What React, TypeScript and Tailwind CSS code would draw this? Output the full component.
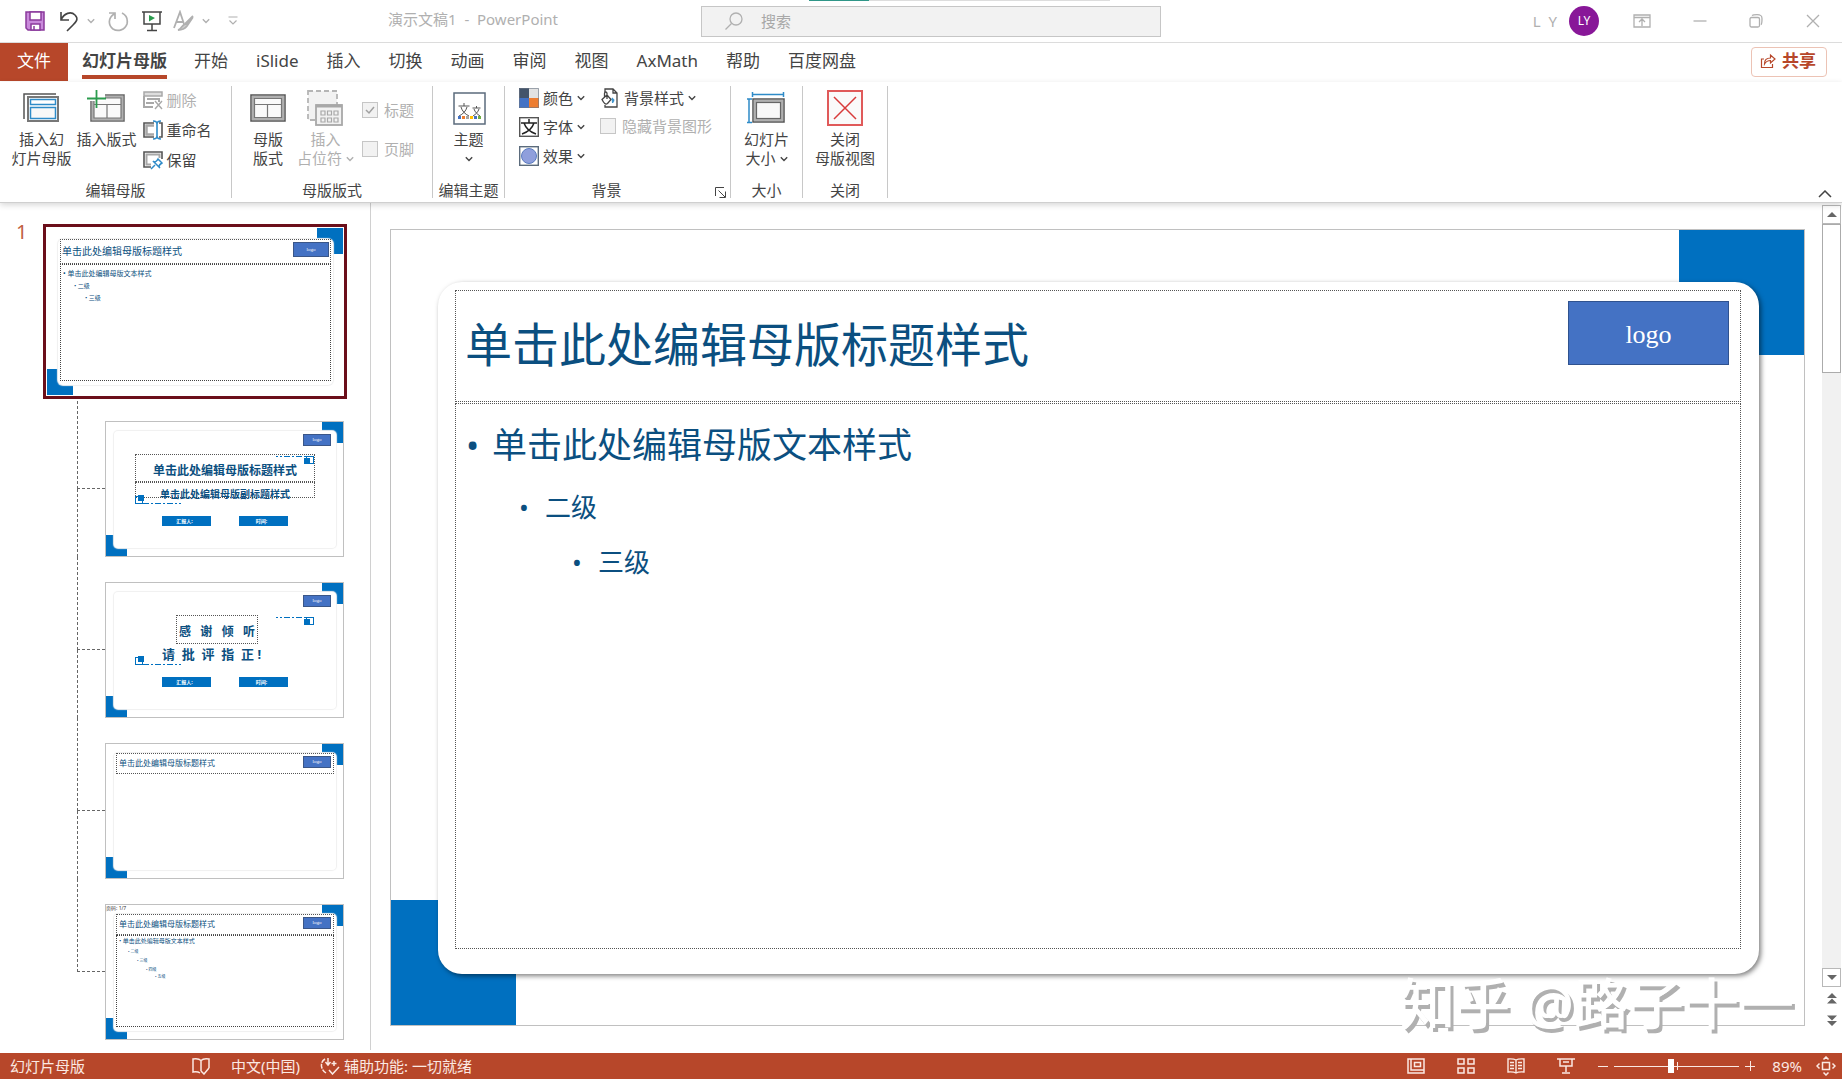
import React, { useState } from 'react';
import clsx from 'clsx';

const TABS = ['开始', 'iSlide', '插入', '切换', '动画', '审阅', '视图', 'AxMath', '帮助', '百度网盘'];

const Chevron: React.FC<{ className?: string }> = ({ className = 'w-2' }) => (
    <svg viewBox="0 0 8 8" className={clsx('shrink-0', className)} fill="none" stroke="currentColor" strokeWidth="1.4">
        <path d="M0.8 2.3 4 5.5 7.2 2.3" />
    </svg>
);

/* ---------- Ribbon icons ---------- */

const InsertMasterIcon = () => (
    <svg viewBox="0 0 36 36" className="h-9 w-9" fill="none">
        <path d="M1 29V4h32" stroke="#555" strokeWidth="1.500" />
        <rect x="5" y="7" width="30" height="24" fill="#fff" stroke="#777" strokeWidth="2" />
        <rect x="7.500" y="9.500" width="25" height="5" stroke="#2e8bc8" strokeWidth="1.500" />
        <rect x="7.500" y="17.500" width="25" height="11" fill="#f8f8f8" stroke="#2e8bc8" strokeWidth="1.500" />
    </svg>
);

const InsertLayoutIcon = () => (
    <svg viewBox="0 0 38 36" className="h-9 w-[38px]" fill="none">
        <rect x="4" y="5" width="33" height="26" fill="#fafafa" stroke="#666" strokeWidth="1.500" />
        <rect x="6" y="7" width="29" height="22" stroke="#b0b0b0" strokeWidth="2" />
        <path d="M7 14.500h27M20 14.500V28M7 8h27v20H7z" stroke="#777" strokeWidth="1.200" />
        <path d="M0 0h18v11H0z" fill="#fff" />
        <path d="M9.500 0v18M0 8.500h19" stroke="#2b9c4e" strokeWidth="1.800" />
    </svg>
);

const LayoutIcon = () => (
    <svg viewBox="0 0 36 36" className="h-9 w-9" fill="none">
        <rect x="1" y="5" width="34" height="26" fill="#fafafa" stroke="#555" strokeWidth="1.500" />
        <rect x="3" y="7" width="30" height="22" stroke="#b0b0b0" strokeWidth="2" />
        <path d="M4.500 14.500h27M17.500 14.500V27.500M4.500 8.500h27v19h-27z" stroke="#777" strokeWidth="1.200" />
    </svg>
);

const PlaceholderIcon = () => (
    <svg viewBox="0 0 36 36" className="h-9 w-9" fill="none">
        <path d="M1 1h29v29H1z" fill="#f2f2f2" stroke="#b5b5b5" strokeWidth="1.800" strokeDasharray="5 3" />
        <rect x="9" y="15" width="26" height="20" fill="#f2f2f2" stroke="#a8a8a8" strokeWidth="1.800" />
        <path d="M9 16h26" stroke="#a8a8a8" strokeWidth="3" />
        <path d="M14 21h4v4h-4zM20.500 21h4v4h-4zM27 21h4v4h-4zM14 28h4v4h-4zM20.500 28h4v4h-4zM27 28h4v4h-4z" stroke="#a8a8a8" strokeWidth="1.200" />
    </svg>
);

const ThemeIcon = () => (
    <svg viewBox="0 0 36 36" className="h-9 w-9" fill="none" stroke="#555">
        <rect x="3" y="3" width="31" height="31" fill="#fff" stroke="#5b6b7c" strokeWidth="1.500" />
        <path d="M7.500 16h11M13 13v3M10 17c1 4 4 7 8 9M16 17c-1 4-4 7-8 9" strokeWidth="1" />
        <path d="M21.500 18h8M25.500 16v2M23 19c1 3 3 5 6 7M28 19c-1 3-3 5-6 7" strokeWidth="1" />
        <path d="M7 27.500h3" stroke="#4472c4" strokeWidth="3" />
        <path d="M11 27.500h3" stroke="#ed7d31" strokeWidth="3" />
        <path d="M15 27.500h3" stroke="#a5a5a5" strokeWidth="3" />
        <path d="M19 27.500h3" stroke="#ffc000" strokeWidth="3" />
        <path d="M23 27.500h3" stroke="#4472c4" strokeWidth="3" />
        <path d="M27 27.500h3" stroke="#70ad47" strokeWidth="3" />
    </svg>
);

const SlideSizeIcon = () => (
    <svg viewBox="0 0 40 36" className="h-9 w-10" fill="none">
        <path d="M6 4.500h32M6.500 2v5M37.500 2v5M3 9v24M1 9h5M1 32.500h5" stroke="#2e8bc8" strokeWidth="1.500" />
        <rect x="7" y="9" width="31" height="23" fill="#f8f8f8" stroke="#555" strokeWidth="1.500" />
        <rect x="9" y="11" width="27" height="19" stroke="#b0b0b0" strokeWidth="2" />
        <rect x="10.500" y="12.500" width="24" height="16" stroke="#666" strokeWidth="1.200" />
    </svg>
);

const CloseMasterIcon = () => (
    <svg viewBox="0 0 36 36" className="h-9 w-9" fill="none" stroke="#e05a5a">
        <rect x="1" y="1" width="34" height="34" fill="#fafafa" strokeWidth="2" />
        <path d="M7 7l22 22M29 7 7 29" stroke="#d83b3b" strokeWidth="1.500" />
    </svg>
);

const DeleteIcon = () => (
    <svg viewBox="0 0 20 20" className="h-5 w-5" fill="none" stroke="#a8a8a8">
        <rect x="1" y="2" width="18" height="4" fill="#ddd" strokeWidth="1.500" />
        <path d="M1 6v11h9M3 13h8M4 9h12v3" strokeWidth="2" />
        <path d="M12 11l7 8M19 11l-7 8" strokeWidth="1.400" />
    </svg>
);

const RenameIcon = () => (
    <svg viewBox="0 0 20 20" className="h-5 w-5" fill="none">
        <path d="M11 3H1v14h10M16 3h3v14h-3" stroke="#555" strokeWidth="1.600" />
        <path d="M11 5.500H3.500v9H11" stroke="#a8a8a8" strokeWidth="2.500" />
        <path d="M10 1c3 0 4 1 4 3v12c0 2-1 3-4 3M18 1c-3 0-4 1-4 3v12c0 2 1 3 4 3" stroke="#2e8bc8" strokeWidth="1.600" />
    </svg>
);

const PreserveIcon = () => (
    <svg viewBox="0 0 20 20" className="h-5 w-5" fill="none">
        <path d="M8 17H1V2h18v7" stroke="#555" strokeWidth="1.600" />
        <path d="M8 14.500H3.500v-10h13V8" stroke="#a8a8a8" strokeWidth="2" />
        <path d="M8 19l4-4M10 11l7 7M11 12c2 0 3-1 4-3l4 4c-2 1-3 2-3 4z" stroke="#2e8bc8" strokeWidth="1.500" fill="#fff" />
    </svg>
);

const ColorsIcon = () => (
    <svg viewBox="0 0 20 20" className="h-5 w-5">
        <path d="M0 0h10v10H0z" fill="#44546a" />
        <path d="M10 0h10v10H10z" fill="#e2e2e2" />
        <path d="M0 10h10v10H0z" fill="#4472c4" />
        <path d="M10 10h10v10H10z" fill="#ed7d31" />
        <path d="M0.500 0.500h19v19H0.500z" fill="none" stroke="#6b7786" strokeOpacity="0.600" />
    </svg>
);

const FontsIcon = () => (
    <svg viewBox="0 0 20 20" className="h-5 w-5" fill="none" stroke="#222">
        <rect x="0.700" y="0.700" width="18.600" height="18.600" fill="#fff" stroke="#555" strokeWidth="1.400" />
        <path d="M2 6h16M10 2v4M5 6c2 6 6 9 12 11M15 6c-2 6-6 9-12 11" strokeWidth="1.500" />
    </svg>
);

const EffectsIcon = () => (
    <svg viewBox="0 0 20 20" className="h-5 w-5">
        <rect x="0.700" y="0.700" width="18.600" height="18.600" fill="#fff" stroke="#5b6b7c" strokeWidth="1.400" />
        <circle cx="10" cy="10" r="7.500" fill="#8f9fdc" stroke="#5a7cc0" />
    </svg>
);

const BackgroundIcon = () => (
    <svg viewBox="0 0 20 20" className="h-5 w-5" fill="none" stroke="#444" strokeWidth="1.300">
        <path d="M5 4V1h8l4 4v14H5v-2M13 1v4h4" />
        <path d="M2 11.500l5-4.500 4 4.500-3.500 4c-2 1.500-3.500 0-5.500-4zM7 11V5.500c0-2-2.500-2-2.500 0V9" fill="#fff" />
        <path d="M12 10c2.500 1 2.500 3 .5 5z" fill="#2e8bc8" stroke="#2e8bc8" strokeWidth="0.800" />
    </svg>
);

/* ---------- Ribbon parts ---------- */

type GroupProps = {
    label: string;
    className: string;
    launcher?: boolean;
    children: React.ReactNode;
};

const Group: React.FC<GroupProps> = ({ label, className, launcher, children }) => (
    <section aria-label={label} className={clsx('relative my-1 flex shrink-0 flex-col border-r border-[#c8c8c8] pt-1', className)}>
        <div className="flex flex-1 justify-center">{children}</div>
        <div className={clsx('text-center leading-[16px]', launcher && 'pr-[22px]')}>{label}</div>
        {launcher && (
            <button aria-label="设置背景格式" className="absolute right-1 bottom-0">
                <svg viewBox="0 0 11 11" className="w-[11px]" fill="none" stroke="#444">
                    <path d="M0.500 9V0.500H9M3.500 3.500 10 10M10.500 4.500v6h-6" />
                </svg>
            </button>
        )}
    </section>
);

type BigButtonProps = {
    icon: React.ReactNode;
    lines: string[];
    menu?: boolean;
    disabled?: boolean;
};

const BigButton: React.FC<BigButtonProps> = ({ icon, lines, menu, disabled }) => (
    <button disabled={disabled} className="flex flex-col items-center self-start leading-[19px] whitespace-nowrap disabled:text-[#b0b0b0]">
        <span className="mb-1 flex h-9">{icon}</span>
        {lines.map((line, i) => (
            <span key={i} className="flex min-h-[19px] items-center gap-1">
                {line}
                {menu && i === lines.length - 1 && <Chevron />}
            </span>
        ))}
    </button>
);

type SmallButtonProps = {
    icon: React.ReactNode;
    label: string;
    menu?: boolean;
    disabled?: boolean;
};

const SmallButton: React.FC<SmallButtonProps> = ({ icon, label, menu, disabled }) => (
    <button disabled={disabled} className="flex items-center gap-1 leading-5 whitespace-nowrap disabled:text-[#b0b0b0]">
        {icon}
        {label}
        {menu && <Chevron />}
    </button>
);

const Check: React.FC<{ label: string; checked?: boolean }> = ({ label, checked = false }) => (
    <label className="flex items-center gap-[6px] leading-5 whitespace-nowrap text-[#b0b0b0]">
        <span className="grid h-4 w-4 place-items-center">
            <input
                type="checkbox"
                checked={checked}
                disabled
                readOnly
                className="col-start-1 row-start-1 h-4 w-4 appearance-none border border-[#c6c6c6] bg-[#f2f2f2]"
            />
            {checked && (
                <svg viewBox="0 0 10 10" className="col-start-1 row-start-1 w-[10px]" fill="none" stroke="#a0a0a0" strokeWidth="1.500">
                    <path d="M1 5l3 3 5-6" />
                </svg>
            )}
        </span>
        {label}
    </label>
);

/* ---------- Title bar ---------- */

const TitleBar = () => (
    <header className="grid h-[43px] grid-cols-[701fr_460fr_681fr] border-b border-[#dcdcdc] text-[#b0b0b0]">
        <div className="flex items-center pl-6 text-[15px]">
            <button aria-label="保存">
                <svg viewBox="0 0 22 22" className="w-[22px]" fill="#c98adb" stroke="#8a3a9c" strokeWidth="1.500">
                    <path d="M2 2h18v18H4l-2-2z" />
                    <path d="M6 2h11v8H6zM7 14h9v6H7z" fill="#fff" />
                    <path d="M10 16v4" />
                </svg>
            </button>
            <button aria-label="撤消" className="ml-3 text-[#444]">
                <svg viewBox="0 0 22 22" className="w-[22px]" fill="none" stroke="currentColor" strokeWidth="1.600">
                    <path d="M3 2v8h8M3 10c3-7 10-9 14-5s1 7-2 10l-6 6" />
                </svg>
            </button>
            <Chevron className="ml-[7px] w-2" />
            <button aria-label="重复" className="ml-3">
                <svg viewBox="0 0 22 22" className="w-[22px]" fill="none" stroke="currentColor" strokeWidth="1.700">
                    <path d="M2 3h6v6M7 4c-6 4-6 11-1 15 5 3 12 1 14-5 1-5-1-9-5-11" />
                </svg>
            </button>
            <button aria-label="从头开始" className="ml-3 text-[#444]">
                <svg viewBox="0 0 22 22" className="w-[22px]" fill="none" stroke="currentColor" strokeWidth="1.500">
                    <path d="M1 2h20M3 2v12h16V2M11 14v6M6 20.500h10" />
                    <path d="M8 5l6 3-6 3.500z" fill="#2b9c4e" stroke="none" />
                </svg>
            </button>
            <button aria-label="墨迹" className="ml-[10px]">
                <svg viewBox="0 0 22 22" className="w-[22px]" fill="none" stroke="currentColor" strokeWidth="1.800">
                    <path d="M1 18 7 2l4 12M3 12h7" />
                    <path d="M20 6l-8 8M20 7l-6 9c-3 4-6 4-9 4 4-1 4-6 8-6z" fill="currentColor" fillOpacity="0.600" />
                </svg>
            </button>
            <Chevron className="ml-[7px] w-2" />
            <button aria-label="自定义快速访问工具栏" className="ml-[18px]">
                <svg viewBox="0 0 10 10" className="w-[10px]" fill="none" stroke="currentColor" strokeWidth="1.200">
                    <path d="M0.500 1h9M1.500 4.500 5 8l3.500-3.500" />
                </svg>
            </button>
            <h1 className="mb-1 ml-[150px] whitespace-pre">演示文稿1  -  PowerPoint</h1>
        </div>
        <div className="relative flex items-center">
            <div className="absolute top-0 left-[108px] flex h-px w-[301px] bg-[#ddd]">
                <span className="w-[60px] bg-[#2f9688]" />
            </div>
            <label className="flex h-[31px] w-full items-center border border-[#c6c6c6] bg-[#f2f2f2] pl-[23px]">
                <svg viewBox="0 0 18 18" className="w-[18px]" fill="none" stroke="currentColor" strokeWidth="1.300">
                    <circle cx="11" cy="7" r="6" />
                    <path d="M6.500 11.500 0.500 17.500" />
                </svg>
                <input
                    type="search"
                    aria-label="搜索"
                    placeholder="搜索"
                    className="ml-[18px] flex-1 bg-transparent text-[15px] outline-none placeholder:text-[#a8a8a8]"
                />
            </label>
        </div>
        <div className="flex items-center justify-end pr-[22px] text-[15px]">
            <span className="whitespace-pre">L  Y</span>
            <button className="ml-3 h-[30px] w-[30px] rounded-full bg-[#881798] text-xs text-white">LY</button>
            <button aria-label="功能区显示选项" className="ml-[34px]">
                <svg viewBox="0 0 18 14" className="w-[18px]" fill="none" stroke="currentColor" strokeWidth="1.300">
                    <path d="M1 1h16v12H1zM1 3.500h16M9 12V5.500M6 8l3-3 3 3" />
                </svg>
            </button>
            <button aria-label="最小化" className="ml-[42px]">
                <svg viewBox="0 0 14 14" className="w-[14px]" stroke="currentColor" strokeWidth="1.300">
                    <path d="M0.500 7h13" />
                </svg>
            </button>
            <button aria-label="还原" className="ml-[42px]">
                <svg viewBox="0 0 14 14" className="w-[14px]" fill="none" stroke="currentColor" strokeWidth="1.300">
                    <rect x="1" y="3.500" width="9.500" height="9.500" rx="1.500" />
                    <path d="M3 1.500c1-.8 2-.8 5-.8 4 0 5 1 5 4 0 3 0 5-1 6" />
                </svg>
            </button>
            <button aria-label="关闭" className="ml-[43px]">
                <svg viewBox="0 0 14 14" className="w-[14px]" stroke="currentColor" strokeWidth="1.300">
                    <path d="M1 1l12 12M13 1 1 13" />
                </svg>
            </button>
        </div>
    </header>
);

const TabBar = () => (
    <nav className="flex h-[39px] items-center text-[17px] leading-6 text-[#444]">
        <button className="h-[38px] w-[68px] self-start bg-[#b7472a] pb-[2px] text-white">文件</button>
        <button className="relative ml-[14px] h-full pb-1 font-bold">
            幻灯片母版
            <span className="absolute inset-x-0 bottom-[3px] h-1 bg-[#b7472a]" />
        </button>
        <div className="ml-[27px] flex gap-7 pb-1">
            {TABS.map((tab) => (
                <button key={tab}>{tab}</button>
            ))}
        </div>
        <button className="mr-[15px] mb-[2px] ml-auto flex h-[30px] items-center gap-[6px] rounded border border-[#ecc3b5] pr-[10px] pb-[2px] pl-2 font-bold text-[#b7472a]">
            <svg viewBox="0 0 16 16" className="w-4" fill="none" stroke="currentColor" strokeWidth="1.200">
                <path d="M4 6H1.500v8.500h11V11M4.500 11c0-4 2-6 6-6V2l4.500 4-4.500 4V7.500c-3 0-4.500 1-6 3.500z" />
            </svg>
            共享
        </button>
    </nav>
);

const Ribbon = () => (
    <div className="relative z-20 flex h-[121px] border-b border-[#cfcfcf] bg-white text-[15px] text-[#444] shadow-[0_2px_6px_rgba(0,0,0,0.16)]">
        <Group label="编辑母版" className="w-[232px]">
            <div className="flex gap-[5px]">
                <BigButton icon={<InsertMasterIcon />} lines={['插入幻', '灯片母版']} />
                <BigButton icon={<InsertLayoutIcon />} lines={['插入版式']} />
            </div>
            <div className="mr-2 ml-[6px] flex flex-col gap-[10px]">
                <SmallButton icon={<DeleteIcon />} label="删除" disabled />
                <SmallButton icon={<RenameIcon />} label="重命名" />
                <SmallButton icon={<PreserveIcon />} label="保留" />
            </div>
        </Group>
        <Group label="母版版式" className="w-[201px]">
            <BigButton icon={<LayoutIcon />} lines={['母版', '版式']} />
            <div className="ml-[11px]">
                <BigButton icon={<PlaceholderIcon />} lines={['插入', '占位符']} menu disabled />
            </div>
            <div className="mt-[10px] ml-2 flex flex-col gap-[19px]">
                <Check label="标题" checked />
                <Check label="页脚" />
            </div>
        </Group>
        <Group label="编辑主题" className="w-[72px]">
            <BigButton icon={<ThemeIcon />} lines={['主题', '']} menu />
        </Group>
        <Group label="背景" launcher className="w-[226px]">
            <div className="-mt-[2px] flex flex-col gap-[9px]">
                <SmallButton icon={<ColorsIcon />} label="颜色" menu />
                <SmallButton icon={<FontsIcon />} label="字体" menu />
                <SmallButton icon={<EffectsIcon />} label="效果" menu />
            </div>
            <div className="-mt-[2px] mr-1 ml-[15px] flex flex-col gap-2">
                <SmallButton icon={<BackgroundIcon />} label="背景样式" menu />
                <Check label="隐藏背景图形" />
            </div>
        </Group>
        <Group label="大小" className="w-[72px]">
            <BigButton icon={<SlideSizeIcon />} lines={['幻灯片', '大小']} menu />
        </Group>
        <Group label="关闭" className="w-[85px]">
            <BigButton icon={<CloseMasterIcon />} lines={['关闭', '母版视图']} />
        </Group>
        <button aria-label="折叠功能区" className="mr-[10px] mb-1 ml-auto self-end">
            <svg viewBox="0 0 14 8" className="w-[14px]" fill="none" stroke="#444" strokeWidth="1.500">
                <path d="M1 7l6-6 6 6" />
            </svg>
        </button>
    </div>
);

/* ---------- Thumbnails ---------- */

const ThumbLogo: React.FC<{ large?: boolean }> = ({ large }) => (
    <span
        className={clsx(
            'flex shrink-0 items-center justify-center border border-[#3a5688] bg-[#4472c4] font-["Liberation_Serif",serif] text-[5px] text-white',
            large ? 'h-[15px] w-9' : 'h-3 w-7'
        )}
    >
        logo
    </span>
);

const CornerTop = () => (
    <svg viewBox="0 0 38 9" className="h-[9px] w-[38px]" fill="none" stroke="#0070c0">
        <path d="M0 0.500h30" strokeDasharray="6 2 2 2" strokeDashoffset="4" />
        <rect x="30.500" y="0.500" width="7" height="7" />
        <path d="M28 2h6v6h-6z" fill="#0070c0" stroke="none" />
    </svg>
);

const CornerBottom = () => (
    <svg viewBox="0 0 46 9" className="h-[9px] w-[46px]" fill="none" stroke="#0070c0">
        <rect x="0.500" y="1.500" width="7" height="7" />
        <path d="M3 0h6v6H3z" fill="#0070c0" stroke="none" />
        <path d="M8 8.500h38" strokeDasharray="6 2 2 2" />
    </svg>
);

const Thumb: React.FC<{ children?: React.ReactNode; header?: string }> = ({ children, header }) => (
    <button className="relative block h-[136px] w-[239px] border border-[#c0c0c0] bg-white pt-[9px] pr-[7px] pb-2 pl-2 text-left text-[#0b4f80]">
        <span className="absolute top-0 right-0 h-[21px] w-[21px] bg-[#0070c0]" />
        <span className="absolute bottom-0 left-0 h-[21px] w-[21px] bg-[#0070c0]" />
        {header && <span className="absolute top-0 left-0 text-[5px] leading-[6px] text-[#333]">{header}</span>}
        <span className="relative flex h-full flex-col rounded-[4px] bg-white shadow-[0_0_1px_1px_#f0f0f0]">{children}</span>
    </button>
);

const CoverFooter = () => (
    <span className="mt-auto mb-[22px] flex justify-center gap-[28px] text-[5px] leading-[10px] font-bold text-white">
        <span className="w-[49px] bg-[#0070c0] pr-1 text-center">汇报人:</span>
        <span className="w-[49px] bg-[#0070c0] pr-1 text-center">时间:</span>
    </span>
);

const TitleThumb = () => (
    <Thumb>
        <span className="flex justify-end pt-[3px] pr-[5px]"><ThumbLogo /></span>
        <span className="absolute top-[25px] right-[22px]"><CornerTop /></span>
        <span className="mx-[21px] mt-2 block h-[28px] border border-dotted border-[#555] pt-1 text-center text-[12px] leading-6 font-bold">
            单击此处编辑母版标题样式
        </span>
        <span className="mx-[21px] block h-4 border border-dotted border-[#555] pt-[3px] text-center text-[10px] leading-4 font-bold whitespace-nowrap">
            单击此处编辑母版副标题样式
        </span>
        <span className="absolute top-[64px] left-[21px]"><CornerBottom /></span>
        <CoverFooter />
    </Thumb>
);

const ThanksThumb = () => (
    <Thumb>
        <span className="flex justify-end pt-[3px] pr-[5px]"><ThumbLogo /></span>
        <span className="absolute top-[25px] right-[22px]"><CornerTop /></span>
        <span className="mt-2 mr-[78px] ml-[62px] block h-[29px] border border-dotted border-[#555] pt-1 text-center text-[12px] leading-6 font-bold whitespace-pre">
            感   谢   倾   听
        </span>
        <span className="block pl-12 text-[13px] leading-5 font-bold whitespace-pre">请  批  评  指  正 !</span>
        <span className="absolute top-[64px] left-[21px]"><CornerBottom /></span>
        <CoverFooter />
    </Thumb>
);

const ThumbTitle = () => (
    <span className="mx-[2px] flex h-[21px] justify-between border border-dotted border-[#555] pr-[2px] pl-[2px] text-[8px] leading-[18px]">
        单击此处编辑母版标题样式
        <span className="pt-[2px]"><ThumbLogo /></span>
    </span>
);

const TitleOnlyThumb = () => (
    <Thumb>
        <ThumbTitle />
    </Thumb>
);

const ContentThumb = () => (
    <Thumb header="页码: 1/7">
        <ThumbTitle />
        <span className="mx-[2px] mb-1 flex flex-1 flex-col border border-dotted border-[#444] pl-[2px] text-[4px] leading-[9px]">
            <span className="pt-px pb-px text-[6px]">• 单击此处编辑母版文本样式</span>
            <span className="pl-[9px]">•  二级</span>
            <span className="pl-[18px]">•  三级</span>
            <span className="pl-[27px]">•  四级</span>
            <span className="pl-[36px] leading-[5px]">•  五级</span>
        </span>
    </Thumb>
);

const MasterThumb = () => (
    <button className="relative z-10 block h-[175px] w-[304px] border-3 border-[#6b0f1a] bg-white p-px text-left text-[#0b4f80]">
        <span className="relative block h-full pt-[11px] pr-[10px] pb-[10px] pl-[11px]">
            <span className="absolute top-0 right-0 h-[26px] w-[26px] bg-[#0070c0]" />
            <span className="absolute bottom-0 left-0 h-[26px] w-[26px] bg-[#0070c0]" />
            <span className="relative flex h-full flex-col rounded-[5px] bg-white px-[2px] pb-1 shadow-[0_0_1px_1px_#f0f0f0]">
                <span className="flex h-[25px] justify-between border border-dotted border-[#555] pr-px pl-px text-[10px] leading-[23px]">
                    单击此处编辑母版标题样式
                    <span className="pt-[2px]"><ThumbLogo large /></span>
                </span>
                <span className="flex flex-1 flex-col border border-dotted border-[#444] pl-[2px] text-[6px] leading-[12px]">
                    <span className="pt-[2px] text-[7px] leading-[13px]">• 单击此处编辑母版文本样式</span>
                    <span className="pl-[11px]">•  二级</span>
                    <span className="pl-[22px]">•  三级</span>
                </span>
            </span>
        </span>
    </button>
);

const LAYOUTS = [TitleThumb, ThanksThumb, TitleOnlyThumb, ContentThumb];

const ThumbnailPane = () => (
    <aside className="mb-[3px] w-[371px] shrink-0 overflow-hidden border-r border-[#d0d0d0] pt-[21px]">
        <div className="flex">
            <span className="w-[43px] pl-4 text-[20px] leading-4 text-[#c0603f]">1</span>
            <MasterThumb />
        </div>
        <ul className="-mt-[3px] pl-[77px]">
            {LAYOUTS.map((Layout, i) => (
                <li key={i} className="flex">
                    <span className="flex w-7 flex-col">
                        <span className="h-[93px] border-b border-l border-dashed border-[#666]" />
                        {i < LAYOUTS.length - 1 && <span className="flex-1 border-l border-dashed border-[#666]" />}
                    </span>
                    <div className="pt-[25px]">
                        <Layout />
                    </div>
                </li>
            ))}
        </ul>
    </aside>
);

/* ---------- Slide canvas ---------- */

const MasterSlide = () => (
    <div className="relative h-full border border-[#c0c0c0] bg-white pt-[52px] pr-[45px] pb-[51px] pl-[47px] text-[#0b4f80]">
        <span className="absolute top-0 right-0 h-[125px] w-[125px] bg-[#0070c0]" />
        <span className="absolute bottom-0 left-0 h-[125px] w-[125px] bg-[#0070c0]" />
        <div className="relative flex h-full flex-col rounded-[24px] bg-white pt-2 pr-[18px] pb-[25px] pl-[17px] shadow-[2px_2px_5px_rgba(0,0,0,0.5)]">
            <div className="flex h-[112px] justify-between border border-dotted border-[#555] pr-[11px] pl-[9px]">
                <h2 className="self-center pb-1 text-[47px] leading-[56px] whitespace-nowrap">单击此处编辑母版标题样式</h2>
                <div className="mt-[10px] flex h-16 w-[161px] shrink-0 items-center justify-center border border-[#2f528f] bg-[#4472c4] pt-[2px] font-['Liberation_Serif',serif] text-[26px] text-white">
                    logo
                </div>
            </div>
            <ul className="mt-px flex-1 border border-dotted border-[#555] pt-[10px] pl-[10px] text-[26px]">
                <li className="flex text-[35px] leading-[62px] whitespace-nowrap">
                    <span className="w-[26px]">•</span>单击此处编辑母版文本样式
                </li>
                <li className="flex pl-[53px] leading-[62px]">
                    <span className="w-[26px]">•</span>二级
                </li>
                <li className="flex pl-[106px] leading-[48px]">
                    <span className="w-[26px]">•</span>三级
                </li>
            </ul>
        </div>
    </div>
);

const ScrollBar = () => (
    <div className="mr-px flex w-[19px] flex-col items-center pt-[2px] text-[#666]">
        <button aria-label="向上滚动" className="flex h-[19px] w-full shrink-0 items-center justify-center border border-[#b8b8b8] bg-white">
            <svg viewBox="0 0 10 5" className="w-[10px]" fill="currentColor"><path d="M5 0l5 5H0z" /></svg>
        </button>
        <div className="w-full flex-1 bg-[#f1f1f1]">
            <div className="h-[149px] border border-[#ababab] bg-white" />
        </div>
        <button aria-label="向下滚动" className="flex h-[19px] w-full shrink-0 items-center justify-center border border-[#b8b8b8] bg-white">
            <svg viewBox="0 0 10 5" className="w-[10px]" fill="currentColor"><path d="M5 5l5-5H0z" /></svg>
        </button>
        <button aria-label="上一张幻灯片" className="mt-[6px]">
            <svg viewBox="0 0 10 11" className="w-[10px]" fill="currentColor"><path d="M5 0l5 5H0zM5 5.500l5 5H0z" /></svg>
        </button>
        <button aria-label="下一张幻灯片" className="mt-[11px] mb-[27px]">
            <svg viewBox="0 0 10 11" className="w-[10px]" fill="currentColor"><path d="M5 5.500l5-5H0zM5 11l5-5H0z" /></svg>
        </button>
    </div>
);

/* ---------- Status bar ---------- */

const StatusBar: React.FC = () => {
    const [zoom, setZoom] = useState(45);

    return (
        <footer className="mb-px flex h-[26px] shrink-0 items-center bg-[#b7472a] pr-[6px] pl-[10px] text-[15px] text-[#fbe9e3]">
            <span className="w-[182px]">幻灯片母版</span>
            <button aria-label="拼写检查">
                <svg viewBox="0 0 18 18" className="w-[18px]" fill="none" stroke="currentColor" strokeWidth="1.500">
                    <path d="M9 4v10M9 3.500C7 1.500 4 1.500 1 2v13c3-.5 5-.5 7 1M9 3.500c2-2 5-2 8-1.500v9M9 14l3 3 5-6" />
                </svg>
            </button>
            <button className="ml-[21px]">中文(中国)</button>
            <button className="ml-5 flex items-center gap-1">
                <svg viewBox="0 0 20 18" className="w-5" fill="none" stroke="currentColor" strokeWidth="1.500">
                    <path d="M5 2C0 5 0 12 6 16" strokeDasharray="5 1" />
                    <path d="M8 1v6M5.500 5 8 8l2.500-3M14 4v5M11.500 6.500h5M9 13l3.500 4L19 10" />
                </svg>
                辅助功能: 一切就绪
            </button>
            <div className="ml-auto flex items-center">
                <button aria-label="普通视图">
                    <svg viewBox="0 0 18 16" className="w-[18px]" fill="none" stroke="currentColor" strokeWidth="1.500">
                        <path d="M1 1h16v14H1zM4 1v11h13M7.500 4.500h6v4h-6z" />
                    </svg>
                </button>
                <button aria-label="幻灯片浏览" className="ml-8">
                    <svg viewBox="0 0 18 16" className="w-[18px]" fill="none" stroke="currentColor" strokeWidth="1.500">
                        <path d="M1 1h6v5H1zM11 1h6v5h-6zM1 10h6v5H1zM11 10h6v5h-6z" />
                    </svg>
                </button>
                <button aria-label="阅读视图" className="ml-8">
                    <svg viewBox="0 0 18 16" className="w-[18px]" fill="none" stroke="currentColor" strokeWidth="1.400">
                        <path d="M9 2v13M9 2C7 .8 4 .8 1 1v13c3-.2 6-.2 8 1 2-1.200 5-1.200 8-1V1c-3-.2-6-.2-8 1M3 4.500h4M3 7.500h4M3 10.500h4M11 4.500h4M11 7.500h4M11 10.500h4" />
                    </svg>
                </button>
                <button aria-label="幻灯片放映" className="ml-8">
                    <svg viewBox="0 0 18 16" className="w-[18px]" fill="none" stroke="currentColor" strokeWidth="1.500">
                        <path d="M0 1h18M3 1v7h12V1M6 4h6M9 8v6M5 15h8" />
                    </svg>
                </button>
                <button aria-label="缩小" className="ml-[23px]">
                    <svg viewBox="0 0 10 10" className="w-[10px]" stroke="currentColor"><path d="M0 5.500h10" /></svg>
                </button>
                <div className="relative mx-[6px] flex w-[125px] items-center">
                    <span className="absolute left-1/2 h-2 w-px bg-[#fbe9e3]" />
                    <input
                        type="range"
                        aria-label="缩放"
                        value={zoom}
                        onChange={(e) => setZoom(Number(e.target.value))}
                        className="relative h-[14px] w-full appearance-none bg-transparent [&::-webkit-slider-runnable-track]:h-px [&::-webkit-slider-runnable-track]:bg-[#fbe9e3] [&::-webkit-slider-thumb]:-mt-[7px] [&::-webkit-slider-thumb]:h-[14px] [&::-webkit-slider-thumb]:w-[6px] [&::-webkit-slider-thumb]:appearance-none [&::-webkit-slider-thumb]:bg-white"
                    />
                </div>
                <button aria-label="放大">
                    <svg viewBox="0 0 10 10" className="w-[10px]" stroke="currentColor"><path d="M0 5.500h10M5.500 0v10" /></svg>
                </button>
                <button className="ml-[17px]">89%</button>
                <button aria-label="使幻灯片适应当前窗口" className="ml-[14px]">
                    <svg viewBox="0 0 20 20" className="w-5" fill="none" stroke="currentColor" strokeWidth="1.500">
                        <path d="M6.500 6.500h7v7h-7zM7.500 3.500 10 1l2.500 2.500M7.500 16.500 10 19l2.500-2.500M3.500 7.500 1 10l2.500 2.500M16.500 7.500 19 10l-2.500 2.500" />
                    </svg>
                </button>
            </div>
        </footer>
    );
};

const App: React.FC = () => {
    return (
        <div className="flex h-screen flex-col overflow-hidden bg-white font-['Noto_Sans','Noto_Sans_CJK_SC',sans-serif]">
            <TitleBar />
            <TabBar />
            <Ribbon />
            <div className="flex min-h-0 flex-1">
                <ThumbnailPane />
                <main className="relative flex min-w-0 flex-1">
                    <div className="min-w-0 flex-1 pt-[26px] pr-[17px] pb-[27px] pl-[19px]">
                        <MasterSlide />
                    </div>
                    <ScrollBar />
                    {/* Watermark over the canvas */}
                    <div className="pointer-events-none absolute right-12 bottom-3 text-[55px] leading-[76px] font-medium whitespace-nowrap text-white [text-shadow:3px_4px_0_#b0b0b0]">
                        知乎 @路子十一
                    </div>
                </main>
            </div>
            <StatusBar />
        </div>
    );
};

export default App;
